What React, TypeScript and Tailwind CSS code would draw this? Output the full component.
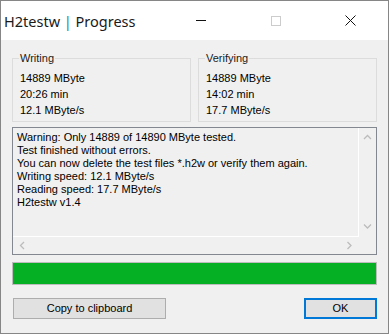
import React from "react";

function Chevron({ dir }: { dir: "up" | "down" | "left" | "right" }) {
  const pts: Record<string, string> = {
    up: "1,5 4.5,1.5 8,5",
    down: "1,1.5 4.5,5 8,1.5",
    left: "5,1 1.5,4.5 5,8",
    right: "1.5,1 5,4.5 1.5,8",
  };
  const vertical = dir === "up" || dir === "down";
  return (
    <svg
      width={vertical ? 9 : 7}
      height={vertical ? 7 : 9}
      viewBox={vertical ? "0 0 9 7" : "0 0 7 9"}
      className="block"
    >
      <polyline points={pts[dir]} fill="none" stroke="#bcbcbc" strokeWidth="1.3" />
    </svg>
  );
}

export default function App() {
  const lines = [
    "Warning: Only 14889 of 14890 MByte tested.",
    "Test finished without errors.",
    "You can now delete the test files *.h2w or verify them again.",
    "Writing speed: 12.1 MByte/s",
    "Reading speed: 17.7 MByte/s",
    "H2testw v1.4",
  ];
  return (
    <div
      className="w-[389px] h-[334px] border border-[#868686] bg-[#f0f0f0] flex flex-col overflow-hidden text-black text-[11px]"
      style={{ fontFamily: '"Liberation Sans", Arial, sans-serif' }}
    >
      {/* Title bar */}
      <div className="h-[39px] bg-white flex items-center shrink-0">
        <div
          className="pl-[3px] text-[14.5px] leading-[20px] text-[#1a1a1a] mt-[1px]"
          style={{ fontFamily: '"Noto Sans", "Open Sans", sans-serif' }}
        >
          H2testw <span className="text-[#2f7f8f]">|</span> Progress
        </div>
        <div className="ml-auto flex h-full">
          <div className="w-[75px] flex items-center justify-center">
            <div className="w-[10px] h-px bg-[#111]" />
          </div>
          <div className="w-[75px] flex items-center justify-center">
            <div className="w-[10px] h-[10px] border border-[#cccccc]" />
          </div>
          <div className="w-[75px] flex items-center justify-center">
            <svg width="11" height="11" viewBox="0 0 11 11" className="block">
              <path d="M0.5 0.5 L10.5 10.5 M10.5 0.5 L0.5 10.5" stroke="#111" strokeWidth="1" fill="none" />
            </svg>
          </div>
        </div>
      </div>

      {/* Body */}
      <div className="flex-1 px-[11px] pt-[12px] flex flex-col">
        <div className="flex gap-[7px]">
          {[
            { t: "Writing", v: ["14889 MByte", "20:26 min", "12.1 MByte/s"] },
            { t: "Verifying", v: ["14889 MByte", "14:02 min", "17.7 MByte/s"] },
          ].map((g) => (
            <fieldset
              key={g.t}
              className="w-[179px] m-0 border border-[#dcdcdc] pl-[7px] pr-0 pt-[5px] pb-[3px]"
            >
              <legend className="px-[1px] -ml-[1px] leading-[13px] text-[#1a1a1a]">{g.t}</legend>
              {g.v.map((l) => (
                <div key={l} className="leading-[16px]">
                  {l}
                </div>
              ))}
            </fieldset>
          ))}
        </div>

        {/* Log area */}
        <div className="mt-[5px] h-[128px] border border-[#828790] flex flex-col">
          <div className="flex flex-1 min-h-0">
            <div className="flex-1 border-r border-b border-white pl-[4px] pt-[3px] leading-[13px] overflow-hidden whitespace-nowrap">
              {lines.map((l) => (
                <div key={l}>{l}</div>
              ))}
            </div>
            <div className="w-[17px] border-b border-[#f0f0f0] flex flex-col items-center justify-between pt-[6px] pb-[6px]">
              <Chevron dir="up" />
              <Chevron dir="down" />
            </div>
          </div>
          <div className="h-[17px] flex items-center shrink-0">
            <div className="flex-1 flex items-center justify-between pl-[6px] pr-[6px]">
              <Chevron dir="left" />
              <Chevron dir="right" />
            </div>
            <div className="w-[17px]" />
          </div>
        </div>

        {/* Progress */}
        <div className="mt-[7px] h-[23px] border border-[#bcbcbc] bg-[#06b025]" />

        {/* Buttons */}
        <div className="mt-[13px] flex justify-between">
          <button className="ml-[1px] w-[153px] h-[21px] border border-[#adadad] bg-[#e1e1e1] text-[11px] leading-[19px] text-black">
            Copy to clipboard
          </button>
          <button className="w-[73px] h-[21px] border-2 border-[#0078d7] bg-[#e1e1e1] text-[11px] leading-[17px] text-black">
            OK
          </button>
        </div>
      </div>
    </div>
  );
}
